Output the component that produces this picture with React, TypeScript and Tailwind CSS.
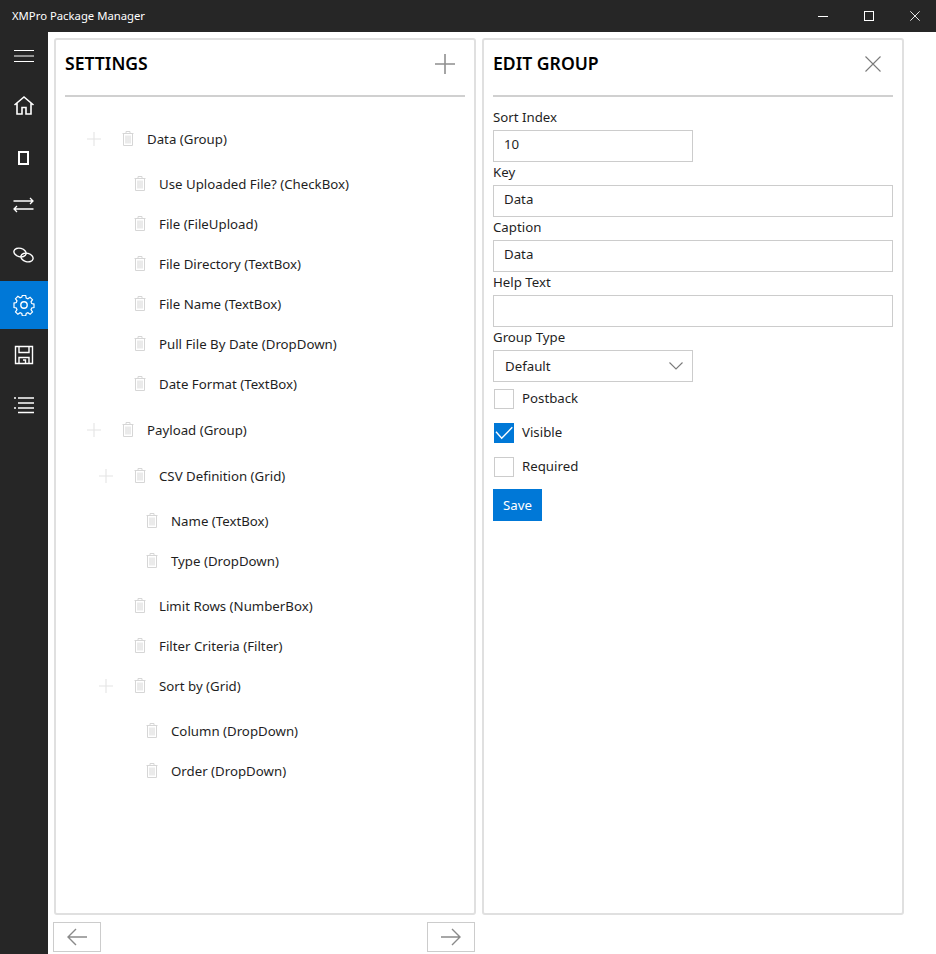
type TreeItem = { label: string; children?: TreeItem[] }

const tree: TreeItem[] = [
  {
    label: 'Data (Group)',
    children: [
      { label: 'Use Uploaded File? (CheckBox)' },
      { label: 'File (FileUpload)' },
      { label: 'File Directory (TextBox)' },
      { label: 'File Name (TextBox)' },
      { label: 'Pull File By Date (DropDown)' },
      { label: 'Date Format (TextBox)' },
    ],
  },
  {
    label: 'Payload (Group)',
    children: [
      {
        label: 'CSV Definition (Grid)',
        children: [{ label: 'Name (TextBox)' }, { label: 'Type (DropDown)' }],
      },
      { label: 'Limit Rows (NumberBox)' },
      { label: 'Filter Criteria (Filter)' },
      {
        label: 'Sort by (Grid)',
        children: [{ label: 'Column (DropDown)' }, { label: 'Order (DropDown)' }],
      },
    ],
  },
]

function Trash() {
  return (
    <svg width="12" height="15" viewBox="0 0 12 15" fill="none" stroke="#d6d6d6" strokeWidth="1">
      <path d="M0.5 2.5h11M4 2.5V0.5h4v2M1.5 2.5v12h9v-12M4 4.5v8M6 4.5v8M8 4.5v8" />
    </svg>
  )
}

function PlusIcon({ size, color, width }: { size: number; color: string; width: number }) {
  return (
    <svg width={size} height={size} viewBox="0 0 20 20" fill="none" stroke={color} strokeWidth={width}>
      <path d="M0 10h20M10 0v20" />
    </svg>
  )
}

function CloseIcon({ size, color, width }: { size: number; color: string; width: number }) {
  return (
    <svg width={size} height={size} viewBox="0 0 16 16" fill="none" stroke={color} strokeWidth={width}>
      <path d="M0.5 0.5l15 15M15.5 0.5l-15 15" />
    </svg>
  )
}

function TreeRow({ item, depth }: { item: TreeItem; depth: number }) {
  return (
    <li>
      <div className="flex h-10 items-center" style={{ paddingLeft: depth * 12 }}>
        <span className="ml-px flex w-[14px] justify-center">
          {item.children && <PlusIcon size={14} color="#e4e4e4" width={1.6} />}
        </span>
        <span className="ml-[21px] mb-[2px] flex w-[12px] justify-center">
          <Trash />
        </span>
        <span className="ml-[13px] pt-[2px] text-[#1f1f1f]">{item.label}</span>
      </div>
      {item.children && (
        <ul className={depth === 0 ? 'mb-[6px] mt-[5px] [li+li>&]:mt-[6px]' : 'my-[5px]'}>
          {item.children.map((child) => (
            <TreeRow key={child.label} item={child} depth={depth + 1} />
          ))}
        </ul>
      )}
    </li>
  )
}

function Field({ label, value, narrow }: { label: string; value?: string; narrow?: boolean }) {
  return (
    <div>
      <div className="flex h-[23px] items-center pb-[2px] text-[#1f1f1f]">{label}</div>
      <div
        className={`flex h-8 items-center border border-[#cccccc] px-[10px] pb-[3px] text-[#1f1f1f] ${
          narrow ? 'w-[200px]' : 'w-full'
        }`}
      >
        {value}
      </div>
    </div>
  )
}

function CheckRow({ label, checked }: { label: string; checked?: boolean }) {
  return (
    <div className="flex h-[34px] items-center pl-px">
      {checked ? (
        <span className="flex h-5 w-5 items-center justify-center bg-[#0078d7]">
          <svg width="20" height="20" viewBox="0 0 20 20" fill="none" stroke="white" strokeWidth="1.4">
            <path d="M2 8.7l5.7 6.6L18.3 4.3" />
          </svg>
        </span>
      ) : (
        <span className="h-5 w-5 border border-[#cccccc]" />
      )}
      <span className="ml-2 text-[#1f1f1f]">{label}</span>
    </div>
  )
}

function NavIcon({ children, active, first }: { children: React.ReactNode; active?: boolean; first?: boolean }) {
  return (
    <div className={`flex items-center justify-center ${first ? 'h-[47px]' : 'h-12'} ${active ? 'bg-[#0078d7]' : ''}`}>
      <svg width="22" height="22" viewBox="0 0 22 22" fill="none" stroke="white" strokeWidth="1.4">
        {children}
      </svg>
    </div>
  )
}

export default function App() {
  return (
    <div
      className="flex h-[954px] w-[936px] flex-col overflow-hidden bg-white text-[13.25px]"
      style={{ fontFamily: '"Noto Sans", sans-serif' }}
    >
      {/* Title bar */}
      <header className="flex h-8 shrink-0 items-center bg-[#262626] pl-3 text-white">
        <span className="text-[11.3px]">XMPro Package Manager</span>
        <div className="ml-auto flex items-center">
          <span className="h-px w-[10px] bg-white" />
          <span className="ml-[36px] h-[10px] w-[10px] border border-white" />
          <span className="ml-[36px] mr-[16px]">
            <CloseIcon size={10} color="white" width={1.4} />
          </span>
        </div>
      </header>

      <div className="flex min-h-0 flex-1">
        {/* Sidebar */}
        <nav className="flex w-12 shrink-0 flex-col gap-[2px] bg-[#262626]">
          <NavIcon first>
            <path d="M1 5.5h20M1 11h20M1 16.5h20" strokeWidth="1" />
          </NavIcon>
          <NavIcon>
            <path d="M1.5 11 11 3l9.5 8M4 9V20h5v-6.5h4V20h5V9" strokeWidth="1.6" />
          </NavIcon>
          <NavIcon>
            <path d="M6 8h9v12H6z" strokeWidth="2" />
          </NavIcon>
          <NavIcon>
            <path d="M0.5 7H20M17 4l3 3-3 3M20.5 15H1M4 12l-3 3 3 3" strokeWidth="1.3" />
          </NavIcon>
          <NavIcon>
            <ellipse cx="7" cy="8.5" rx="6.2" ry="4.2" transform="rotate(15 7 8.5)" />
            <ellipse cx="14" cy="13.5" rx="6.2" ry="4.2" transform="rotate(15 14 13.5)" />
          </NavIcon>
          <NavIcon active>
            <circle cx="11" cy="11" r="3.2" />
            <path d="M9.3 1.5h3.4l.5 2.6 1.7.7 2.2-1.5 2.4 2.4-1.5 2.2.7 1.7 2.3.5v3.4l-2.3.5-.7 1.7 1.5 2.2-2.4 2.4-2.2-1.5-1.7.7-.5 2.3H9.3l-.5-2.3-1.7-.7-2.2 1.5-2.4-2.4 1.5-2.2-.7-1.7-2.3-.5V9.1l2.3-.5.7-1.7-1.5-2.2 2.4-2.4 2.2 1.5 1.7-.7z" strokeWidth="1.2" />
          </NavIcon>
          <NavIcon>
            <path d="M2.5 2.5h17v17h-17zM6 2.5v6h10v-6M6 19.5v-6h10v6M10 16h2.5v3.5" />
          </NavIcon>
          <NavIcon>
            <path d="M5 4h16M5 9h16M5 14h16M5 18.5h16M1 4h2M1 14h2" strokeWidth="1.4" />
          </NavIcon>
        </nav>

        {/* Content */}
        <main className="flex min-w-0 flex-1 flex-col">
          <div className="flex h-[883px] gap-[6px] pl-[6px] pt-[6px]">
            <section className="h-[877px] w-[422px] rounded-[3px] border-2 border-[#e0e0e0] px-[9px]">
              <div className="flex h-[57px] items-center justify-between border-b-2 border-[#d0d0d0] pb-2">
                <h2 className="text-[17.6px] font-semibold text-black">SETTINGS</h2>
                <span className="mr-[10px]">
                  <PlusIcon size={20} color="#8f8f8f" width={1.6} />
                </span>
              </div>
              <ul className="mt-[22px] pl-[21px]">
                {tree.map((item) => (
                  <TreeRow key={item.label} item={item} depth={0} />
                ))}
              </ul>
            </section>

            <section className="h-[877px] w-[422px] rounded-[3px] border-2 border-[#e0e0e0] px-[9px]">
              <div className="flex h-[57px] items-center justify-between border-b-2 border-[#d0d0d0] pb-2">
                <h2 className="text-[17.6px] font-semibold text-black">EDIT GROUP</h2>
                <span className="mr-[12px]">
                  <CloseIcon size={16} color="#7a7a7a" width={1.1} />
                </span>
              </div>
              <div className="mt-[10px]">
                <Field label="Sort Index" value="10" narrow />
                <Field label="Key" value="Data" />
                <Field label="Caption" value="Data" />
                <Field label="Help Text" />
                <div>
                  <div className="flex h-[23px] items-center pb-[2px] text-[#1f1f1f]">Group Type</div>
                  <div className="flex h-8 w-[200px] items-center justify-between border border-[#cccccc] pl-[11px] pr-[9px] text-[#1f1f1f]">
                    <span className="pt-[2px]">Default</span>
                    <svg width="14" height="8" viewBox="0 0 14 8" fill="none" stroke="#7a7a7a" strokeWidth="1.1">
                      <path d="M0.5 0.5 7 7l6.5-6.5" />
                    </svg>
                  </div>
                </div>
                <div>
                  <CheckRow label="Postback" />
                  <CheckRow label="Visible" checked />
                  <CheckRow label="Required" />
                </div>
                <button className="mt-[5px] h-8 w-[49px] bg-[#0078d7] pt-[2px] text-white">Save</button>
              </div>
            </section>
          </div>

          <div className="mt-[7px] flex w-[427px] justify-between pl-[5px]">
            <button className="flex h-[30px] w-[48px] items-center justify-center border border-[#cccccc]">
              <svg width="20" height="18" viewBox="0 0 20 18" fill="none" stroke="#8a8a8a" strokeWidth="1.4">
                <path d="M20 9H1M9 1 1 9l8 8" />
              </svg>
            </button>
            <button className="flex h-[30px] w-[48px] items-center justify-center border border-[#cccccc]">
              <svg width="20" height="18" viewBox="0 0 20 18" fill="none" stroke="#8a8a8a" strokeWidth="1.4">
                <path d="M0 9h19M11 1l8 8-8 8" />
              </svg>
            </button>
          </div>
        </main>
      </div>
    </div>
  )
}
